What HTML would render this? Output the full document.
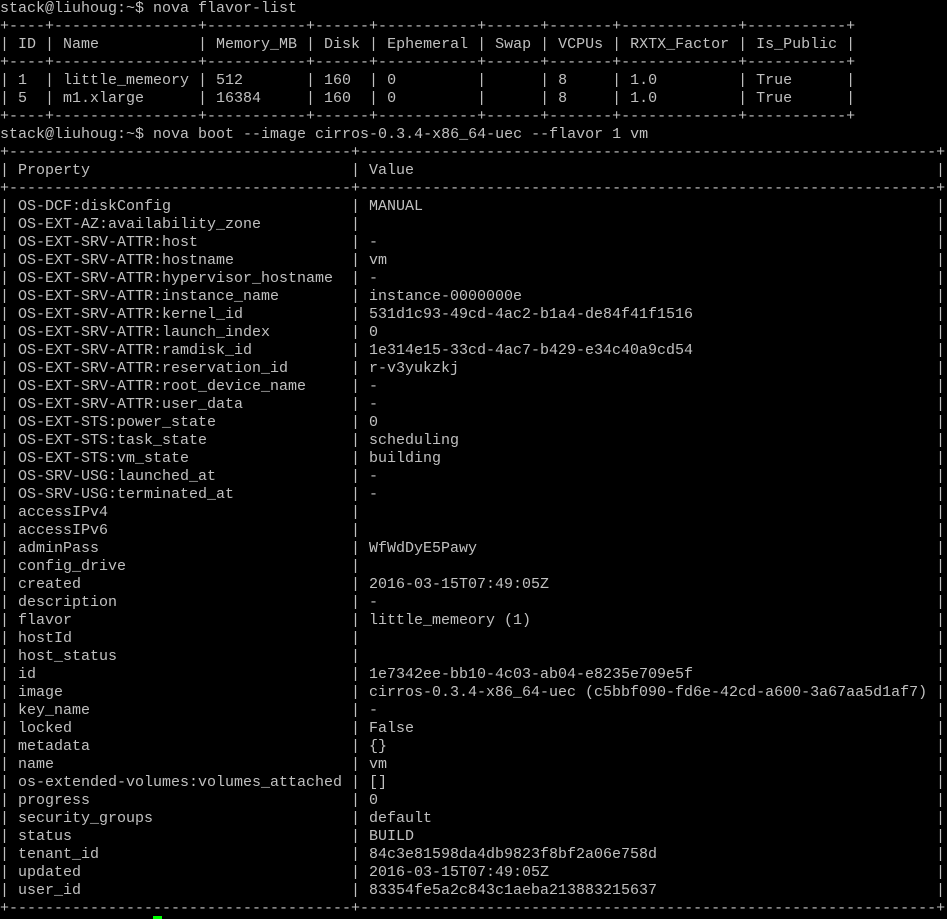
<!DOCTYPE html>
<html><head><meta charset="utf-8"><style>
html,body{margin:0;padding:0;background:#000;width:947px;height:919px;overflow:hidden}
body{font-family:"Liberation Mono","DejaVu Sans Mono",monospace;font-size:15px;line-height:18px;color:#c0c0c0;position:relative}
.l,.r span{white-space:pre}
.l{height:18px}
.r{display:flex;height:18px}
.p{width:351px;flex:none;overflow:hidden}
.v{width:585px;flex:none;overflow:hidden}
#cur{position:absolute;left:153px;top:916px;width:9px;height:3px;background:#00ff00}
</style></head><body><div class="l">stack@liuhoug:~$ nova flavor-list</div><div class="l">+----+----------------+-----------+------+-----------+------+-------+-------------+-----------+</div><div class="l">| ID | Name           | Memory_MB | Disk | Ephemeral | Swap | VCPUs | RXTX_Factor | Is_Public |</div><div class="l">+----+----------------+-----------+------+-----------+------+-------+-------------+-----------+</div><div class="l">| 1  | little_memeory | 512       | 160  | 0         |      | 8     | 1.0         | True      |</div><div class="l">| 5  | m1.xlarge      | 16384     | 160  | 0         |      | 8     | 1.0         | True      |</div><div class="l">+----+----------------+-----------+------+-----------+------+-------+-------------+-----------+</div><div class="l">stack@liuhoug:~$ nova boot --image cirros-0.3.4-x86_64-uec --flavor 1 vm</div><div class="l">+--------------------------------------+----------------------------------------------------------------+</div>
<div class="r"><span class="p">| Property</span><span class="v">| Value</span><span>|</span></div>
<div class="l">+--------------------------------------+----------------------------------------------------------------+</div>
<div class="r"><span class="p">| OS-DCF:diskConfig</span><span class="v">| MANUAL</span><span>|</span></div>
<div class="r"><span class="p">| OS-EXT-AZ:availability_zone</span><span class="v">|</span><span>|</span></div>
<div class="r"><span class="p">| OS-EXT-SRV-ATTR:host</span><span class="v">| -</span><span>|</span></div>
<div class="r"><span class="p">| OS-EXT-SRV-ATTR:hostname</span><span class="v">| vm</span><span>|</span></div>
<div class="r"><span class="p">| OS-EXT-SRV-ATTR:hypervisor_hostname</span><span class="v">| -</span><span>|</span></div>
<div class="r"><span class="p">| OS-EXT-SRV-ATTR:instance_name</span><span class="v">| instance-0000000e</span><span>|</span></div>
<div class="r"><span class="p">| OS-EXT-SRV-ATTR:kernel_id</span><span class="v">| 531d1c93-49cd-4ac2-b1a4-de84f41f1516</span><span>|</span></div>
<div class="r"><span class="p">| OS-EXT-SRV-ATTR:launch_index</span><span class="v">| 0</span><span>|</span></div>
<div class="r"><span class="p">| OS-EXT-SRV-ATTR:ramdisk_id</span><span class="v">| 1e314e15-33cd-4ac7-b429-e34c40a9cd54</span><span>|</span></div>
<div class="r"><span class="p">| OS-EXT-SRV-ATTR:reservation_id</span><span class="v">| r-v3yukzkj</span><span>|</span></div>
<div class="r"><span class="p">| OS-EXT-SRV-ATTR:root_device_name</span><span class="v">| -</span><span>|</span></div>
<div class="r"><span class="p">| OS-EXT-SRV-ATTR:user_data</span><span class="v">| -</span><span>|</span></div>
<div class="r"><span class="p">| OS-EXT-STS:power_state</span><span class="v">| 0</span><span>|</span></div>
<div class="r"><span class="p">| OS-EXT-STS:task_state</span><span class="v">| scheduling</span><span>|</span></div>
<div class="r"><span class="p">| OS-EXT-STS:vm_state</span><span class="v">| building</span><span>|</span></div>
<div class="r"><span class="p">| OS-SRV-USG:launched_at</span><span class="v">| -</span><span>|</span></div>
<div class="r"><span class="p">| OS-SRV-USG:terminated_at</span><span class="v">| -</span><span>|</span></div>
<div class="r"><span class="p">| accessIPv4</span><span class="v">|</span><span>|</span></div>
<div class="r"><span class="p">| accessIPv6</span><span class="v">|</span><span>|</span></div>
<div class="r"><span class="p">| adminPass</span><span class="v">| WfWdDyE5Pawy</span><span>|</span></div>
<div class="r"><span class="p">| config_drive</span><span class="v">|</span><span>|</span></div>
<div class="r"><span class="p">| created</span><span class="v">| 2016-03-15T07:49:05Z</span><span>|</span></div>
<div class="r"><span class="p">| description</span><span class="v">| -</span><span>|</span></div>
<div class="r"><span class="p">| flavor</span><span class="v">| little_memeory (1)</span><span>|</span></div>
<div class="r"><span class="p">| hostId</span><span class="v">|</span><span>|</span></div>
<div class="r"><span class="p">| host_status</span><span class="v">|</span><span>|</span></div>
<div class="r"><span class="p">| id</span><span class="v">| 1e7342ee-bb10-4c03-ab04-e8235e709e5f</span><span>|</span></div>
<div class="r"><span class="p">| image</span><span class="v">| cirros-0.3.4-x86_64-uec (c5bbf090-fd6e-42cd-a600-3a67aa5d1af7)</span><span>|</span></div>
<div class="r"><span class="p">| key_name</span><span class="v">| -</span><span>|</span></div>
<div class="r"><span class="p">| locked</span><span class="v">| False</span><span>|</span></div>
<div class="r"><span class="p">| metadata</span><span class="v">| {}</span><span>|</span></div>
<div class="r"><span class="p">| name</span><span class="v">| vm</span><span>|</span></div>
<div class="r"><span class="p">| os-extended-volumes:volumes_attached</span><span class="v">| []</span><span>|</span></div>
<div class="r"><span class="p">| progress</span><span class="v">| 0</span><span>|</span></div>
<div class="r"><span class="p">| security_groups</span><span class="v">| default</span><span>|</span></div>
<div class="r"><span class="p">| status</span><span class="v">| BUILD</span><span>|</span></div>
<div class="r"><span class="p">| tenant_id</span><span class="v">| 84c3e81598da4db9823f8bf2a06e758d</span><span>|</span></div>
<div class="r"><span class="p">| updated</span><span class="v">| 2016-03-15T07:49:05Z</span><span>|</span></div>
<div class="r"><span class="p">| user_id</span><span class="v">| 83354fe5a2c843c1aeba213883215637</span><span>|</span></div>
<div class="l">+--------------------------------------+----------------------------------------------------------------+</div>
<div id="cur"></div>
</body></html>
